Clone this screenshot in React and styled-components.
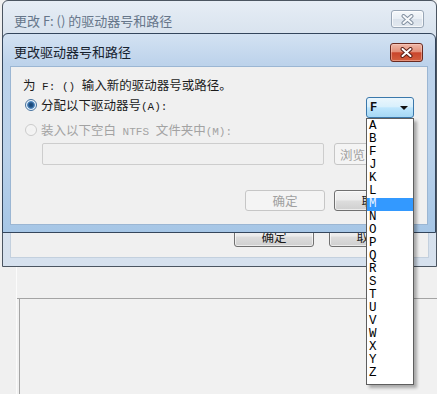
import React from "react";
import styled, { createGlobalStyle } from "styled-components";

const CJK = `"Noto Sans CJK SC", "Noto Sans", sans-serif`;
const MONO = `"Liberation Mono", "DejaVu Sans Mono", monospace`;

const GlobalStyle = createGlobalStyle`
  html, body { margin: 0; padding: 0; background: #f0f0f0; }
  body { width: 437px; height: 394px; overflow: hidden; font-family: ${CJK}; }
`;

const Desktop = styled.div`
  position: relative;
  width: 437px;
  height: 394px;
  overflow: hidden;
  background: #f0f0f0;
  display: flex;
  flex-direction: column;
`;

const Window = styled.div`
  box-sizing: border-box;
  display: flex;
  flex-direction: column;
  flex: none;
  border: 1px solid ${(p) => (p.$active ? "#34465c" : "#4b5561")};
  border-radius: 6px 6px 0 0;
  background: ${(p) =>
    p.$active
      ? "linear-gradient(180deg, #d3e2f2 0px, #bdd3eb 30px, #b9d1ea 60%, #a6c6e6 100%)"
      : "linear-gradient(180deg, #e6edf5 0px, #dae4ef 30px, #d6e1ee 100%)"};
  padding: 0 7px ${(p) => (p.$active ? 7 : 8)}px;
`;

const BackWindow = styled(Window)`
  margin-left: 2px;
  width: 435px;
  height: 267px;
`;

const FrontWindow = styled(Window)`
  position: absolute;
  left: 2px;
  top: 33px;
  width: 434px;
  height: 200px;
`;

const TitleBar = styled.div`
  height: 32px;
  flex: none;
  display: flex;
  justify-content: space-between;
  align-items: flex-start;
`;

const TitleText = styled.div`
  margin: ${(p) => (p.$active ? 10 : 12)}px 0 0 4px;
  font-family: ${CJK};
  font-size: 13px;
  line-height: 16px;
  color: ${(p) => (p.$active ? "#16212d" : "#66768a")};
  white-space: nowrap;
`;

const CloseButton = styled.div`
  box-sizing: border-box;
  margin: 9px 5px 0 0;
  width: 33px;
  height: ${(p) => (p.$active ? 19 : 18)}px;
  border-radius: 3px;
  display: flex;
  align-items: center;
  justify-content: center;
  border: 1px solid ${(p) => (p.$active ? "#6a2a20" : "#98a6b6")};
  background: ${(p) =>
    p.$active
      ? "linear-gradient(180deg, #efb8a8 0%, #e39079 45%, #c9452b 52%, #d3603f 100%)"
      : "linear-gradient(180deg, #f5f8fb 0%, #e8eef4 48%, #dbe3ec 52%, #e2e8ef 100%)"};
  box-shadow: inset 0 0 0 1px ${(p) => (p.$active ? "rgba(255,210,200,0.45)" : "rgba(255,255,255,0.7)")};
`;

const XIcon = ({ active }) => (
  <svg width="13" height="11" viewBox="0 0 13 11">
    <path d="M2.5 2 L10.5 9 M10.5 2 L2.5 9" stroke={active ? "#5a1f16" : "#8391a1"} strokeWidth="4" strokeLinecap="round" />
    <path d="M2.5 2 L10.5 9 M10.5 2 L2.5 9" stroke={active ? "#ffffff" : "#f7f9fb"} strokeWidth="2" strokeLinecap="round" />
  </svg>
);

const Client = styled.div`
  box-sizing: border-box;
  flex: 1;
  display: flex;
  flex-direction: column;
  background: #f0f0f0;
  border: 1px solid ${(p) => (p.$active ? "#9bb6d3" : "#c3d0de")};
`;

const BackClient = styled(Client)`
  justify-content: flex-end;
`;

const FrontClient = styled(Client)`
  padding: 10px 13px 0 12px;
`;

const Text = styled.div`
  font-family: ${CJK};
  font-size: 12.5px;
  line-height: 16px;
  height: 16px;
  color: ${(p) => (p.$disabled ? "#a3a3a3" : "#1b1b1b")};
  white-space: nowrap;
`;

const Mono = styled.span`
  font-family: ${MONO};
  font-size: 11px;
  white-space: pre;
`;

const Row = styled.div`
  display: flex;
  align-items: flex-start;
  justify-content: ${(p) => p.$justify || "flex-start"};
  gap: ${(p) => p.$gap || 0}px;
  margin-top: ${(p) => p.$top || 0}px;
`;

const Option = styled.div`
  display: flex;
  align-items: center;
  gap: 4px;
  margin-left: 2px;
  height: 16px;
`;

const Radio = styled.span`
  box-sizing: border-box;
  width: 12px;
  height: 12px;
  border-radius: 50%;
  flex: none;
  border: 1px solid ${(p) => (p.$checked ? "#47739f" : "#cbcbcb")};
  background: ${(p) =>
    p.$checked
      ? "radial-gradient(circle at 50% 50%, #17426e 0, #24578c 2.2px, #5d93c8 3.6px, #e4eef8 4.2px, #ffffff 100%)"
      : "radial-gradient(circle at 50% 50%, #f1f1f1 0, #f6f6f6 100%)"};
`;

const ComboWrap = styled.div`
  position: relative;
  flex: none;
`;

const Combo = styled.div`
  box-sizing: border-box;
  width: 48px;
  height: 21px;
  border: 1px solid #3a78ab;
  border-radius: 3px;
  display: flex;
  align-items: center;
  justify-content: space-between;
  padding: 0 5px 0 3px;
  background: linear-gradient(180deg, #eaf6fd 0%, #d9f0fc 45%, #bee6fd 52%, #a6d8f4 100%);
  font-family: ${MONO};
  font-weight: bold;
  font-size: 12px;
  color: #101010;
`;

const Arrow = styled.span`
  width: 0;
  height: 0;
  border-left: 4px solid transparent;
  border-right: 4px solid transparent;
  border-top: 4px solid #111;
`;

const List = styled.div`
  position: absolute;
  top: 100%;
  left: 0;
  box-sizing: border-box;
  width: 48px;
  background: #fff;
  border: 1px solid #5e5e5e;
  padding: 1px 0 4px;
  box-shadow: 3px 3px 3px rgba(0, 0, 0, 0.3);
  z-index: 5;
`;

const ListItem = styled.div`
  height: 13px;
  line-height: 13px;
  padding-left: 2px;
  font-family: ${MONO};
  font-size: 12.5px;
  color: ${(p) => (p.$selected ? "#e8f3ff" : "#000")};
  background: ${(p) => (p.$selected ? "#3399ff" : "transparent")};
`;

const Field = styled.div`
  box-sizing: border-box;
  flex: 1;
  height: 22px;
  margin-left: 19px;
  border: 1px solid #cdcdcd;
  border-radius: 2px;
  background: #f0f0f0;
`;

const Button = styled.div`
  box-sizing: border-box;
  width: ${(p) => p.$w || 80}px;
  height: ${(p) => p.$h || 21}px;
  flex: none;
  display: flex;
  align-items: center;
  justify-content: ${(p) => (p.$left ? "flex-start" : "center")};
  padding-left: ${(p) => (p.$left ? 5 : 0)}px;
  border-radius: 3px;
  font-family: ${CJK};
  font-size: 12.5px;
  color: ${(p) => (p.$disabled ? "#a0a0a0" : "#1a1a1a")};
  border: 1px solid ${(p) => (p.$disabled ? "#c6c6c6" : "#707070")};
  background: ${(p) =>
    p.$disabled
      ? "#f4f4f4"
      : "linear-gradient(180deg, #f2f2f2 0%, #ebebeb 48%, #dddddd 52%, #cfcfcf 100%)"};
  box-shadow: inset 0 0 0 1px ${(p) => (p.$disabled ? "transparent" : "rgba(255,255,255,0.6)")};
`;

const BackButtons = styled.div`
  display: flex;
  justify-content: flex-end;
  gap: 15px;
  padding: 0 19px 10px 0;
`;

const Lower = styled.div`
  flex: 1;
  display: flex;
  padding-left: 16px;
`;

const Pane = styled.div`
  flex: 1;
  display: flex;
  flex-direction: column;
  border-left: 1px solid #fbfbfb;
`;

const PaneGap = styled.div`
  height: 31px;
  flex: none;
`;

const Sheet = styled.div`
  flex: 1;
  display: flex;
  border-top: 1px solid #a4a4a4;
  padding-left: 2px;
  background: #f1f1f1;
`;

const SheetColumn = styled.div`
  flex: 1;
  border-left: 1px solid #a4a4a4;
`;

const LETTERS = ["A", "B", "F", "J", "K", "L", "M", "N", "O", "P", "Q", "R", "S", "T", "U", "V", "W", "X", "Y", "Z"];

export default function App() {
  return (
    <>
      <GlobalStyle />
      <Desktop>
        <BackWindow>
          <TitleBar>
            <TitleText>更改 F: () 的驱动器号和路径</TitleText>
            <CloseButton>
              <XIcon />
            </CloseButton>
          </TitleBar>
          <BackClient>
            <BackButtons>
              <Button>确定</Button>
              <Button>取消</Button>
            </BackButtons>
          </BackClient>
        </BackWindow>
        <Lower>
          <Pane>
            <PaneGap />
            <Sheet>
              <SheetColumn />
            </Sheet>
          </Pane>
        </Lower>

        <FrontWindow $active>
          <TitleBar>
            <TitleText $active>更改驱动器号和路径</TitleText>
            <CloseButton $active>
              <XIcon active />
            </CloseButton>
          </TitleBar>
          <FrontClient $active>
            <Text>
              为<Mono> F: () </Mono>输入新的驱动器号或路径。
            </Text>
            <Row $top={4} $justify="space-between">
              <Option>
                <Radio $checked />
                <Text>
                  分配以下驱动器号<Mono>(A):</Mono>
                </Text>
              </Option>
              <ComboWrap>
                <Combo>
                  <span>F</span>
                  <Arrow />
                </Combo>
                <List>
                  {LETTERS.map((l) => (
                    <ListItem key={l} $selected={l === "M"}>
                      {l}
                    </ListItem>
                  ))}
                </List>
              </ComboWrap>
            </Row>
            <Row $top={4}>
              <Option>
                <Radio />
                <Text $disabled>
                  装入以下空白<Mono> NTFS </Mono>文件夹中<Mono>(M):</Mono>
                </Text>
              </Option>
            </Row>
            <Row $top={5} $gap={10}>
              <Field />
              <Button $disabled $h={22} $left>
                浏览(R)...
              </Button>
            </Row>
            <Row $top={25} $gap={9} $justify="flex-end">
              <Button $disabled>确定</Button>
              <Button>取消</Button>
            </Row>
          </FrontClient>
        </FrontWindow>
      </Desktop>
    </>
  );
}
